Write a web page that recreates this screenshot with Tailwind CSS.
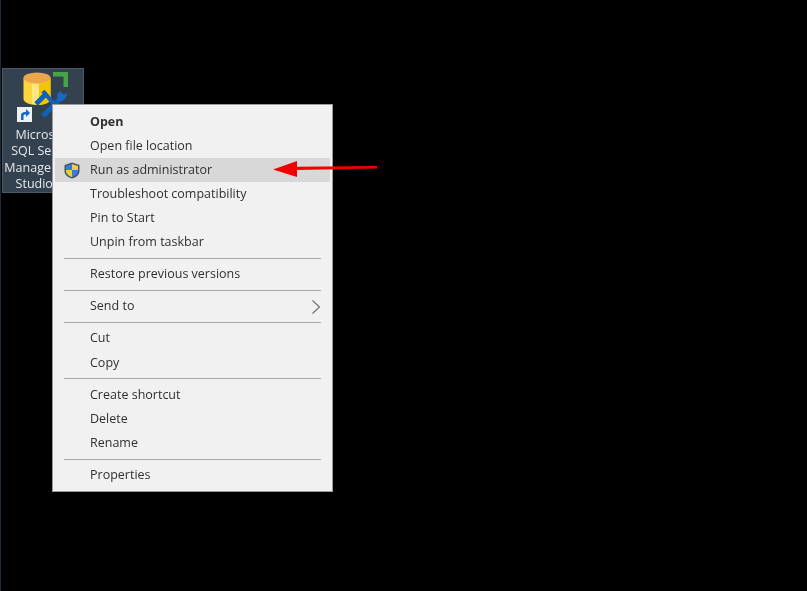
<!DOCTYPE html>
<html lang="en">
<head>
  <meta charset="UTF-8" />
  <title>Context menu</title>
  <script src="https://cdn.jsdelivr.net/npm/@tailwindcss/browser@4"></script>
</head>
<body class="bg-black">
  <div class="relative w-[807px] h-[591px] overflow-hidden bg-black font-['Open_Sans',sans-serif] border-l border-[#1c2a3a] blur-[0.35px]">

    <!-- desktop icon -->
    <div class="absolute left-[1px] top-[68px] w-[82px] h-[125px] bg-[#34424f] border border-[#4c5a68] text-[#e4e8ec] text-[12.5px] leading-[16.4px] text-center pt-[58px]">
      <svg class="absolute left-[14px] top-[1px]" width="56" height="56" viewBox="0 0 56 56">
        <path d="M6.500 8v21c0 3 6 6 13.500 6s13.500-3 13.500-6V8z" fill="#fdd53c"/>
        <path d="M22 14v21c7-.5 11.500-3 11.500-6V8c0 3-4.500 5.500-11.500 6z" fill="#f4c400"/>
        <path d="M15 13v21l7 1V14z" fill="#ffe680"/>
        <ellipse cx="20" cy="8" rx="13.500" ry="5.500" fill="#eda64c"/>
        <path d="M36 2h15v15h-4.500V6.500H36z" fill="#45a545"/>
        <path d="M19 34L30 23" fill="none" stroke="#0f62b8" stroke-width="5"/>
        <path d="M26 21l10 12" fill="none" stroke="#0f62b8" stroke-width="4"/>
        <path d="M26 46l18-18" fill="none" stroke="#0f62b8" stroke-width="5"/>
        <path d="M40 24l4-3c0 2 2 4 4 3l2-1c0 5-4 9-9 8z" fill="#1569c7"/>
      </svg>
      <svg class="absolute left-[14px] top-[38px]" width="15" height="15" viewBox="0 0 15 15">
        <rect width="15" height="15" fill="#eef1f4"/>
        <path d="M4 13V8c0-2 2-3 4-3h1V2l4 4-4 4V7.500H8c-1 0-1.500.5-1.500 1.500v4z" fill="#1668c4"/>
      </svg>
      <div class="whitespace-nowrap">Microsoft</div>
      <div class="whitespace-nowrap">SQL Server</div>
      <div class="whitespace-nowrap -mx-2">Management</div>
      <div class="whitespace-nowrap">Studio 18</div>
    </div>

    <!-- context menu -->
    <div class="absolute left-[51px] top-[104px] w-[281px] h-[388px] bg-[#f2f1f2] border border-[#9a9a9a] pt-[5px] px-[2px] text-[#303030] text-[12.5px]">
      <div class="h-[24.1px] flex items-center pl-[35px] font-bold">Open</div>
      <div class="h-[24.1px] flex items-center pl-[35px]">Open file location</div>
      <div class="h-[24.1px] flex items-center pl-[35px] relative bg-[#d9d8d9]">
        <svg class="absolute left-[9px] top-[4px]" width="16" height="17" viewBox="0 0 16 17">
          <path d="M8 .5L15.500 3v6c0 4-3.500 6.500-7.500 7.500C4 15.500.5 13 .5 9V3z" fill="#44566c"/>
          <path d="M8 2L2 4v4h6z" fill="#2e7fd6"/>
          <path d="M8 2l6 2v4H8z" fill="#f6c83e"/>
          <path d="M2 8h6v7C5 14.200 2 12 2 9z" fill="#f6c83e"/>
          <path d="M8 8h6v1c0 3-3 5.200-6 6z" fill="#2e7fd6"/>
        </svg>
        Run as administrator
      </div>
      <div class="h-[24.1px] flex items-center pl-[35px]">Troubleshoot compatibility</div>
      <div class="h-[24.1px] flex items-center pl-[35px]">Pin to Start</div>
      <div class="h-[24.1px] flex items-center pl-[35px]">Unpin from taskbar</div>
      <div class="h-[8px] flex items-center pl-[9px] pr-[9px]"><div class="w-full h-px bg-[#a8a8a8]"></div></div>
      <div class="h-[24.1px] flex items-center pl-[35px]">Restore previous versions</div>
      <div class="h-[8px] flex items-center pl-[9px] pr-[9px]"><div class="w-full h-px bg-[#a8a8a8]"></div></div>
      <div class="h-[24.1px] flex items-center justify-between pl-[35px] pr-[9px]">
        Send to
        <svg width="10" height="16" viewBox="0 0 10 16" fill="none" stroke="#6a6a6a" stroke-width="1.100"><path d="M1.500 1.500L8.500 8l-7 6.500"/></svg>
      </div>
      <div class="h-[8px] flex items-center pl-[9px] pr-[9px]"><div class="w-full h-px bg-[#a8a8a8]"></div></div>
      <div class="h-[24.1px] flex items-center pl-[35px]">Cut</div>
      <div class="h-[24.1px] flex items-center pl-[35px]">Copy</div>
      <div class="h-[8px] flex items-center pl-[9px] pr-[9px]"><div class="w-full h-px bg-[#a8a8a8]"></div></div>
      <div class="h-[24.1px] flex items-center pl-[35px]">Create shortcut</div>
      <div class="h-[24.1px] flex items-center pl-[35px]">Delete</div>
      <div class="h-[24.1px] flex items-center pl-[35px]">Rename</div>
      <div class="h-[8px] flex items-center pl-[9px] pr-[9px]"><div class="w-full h-px bg-[#a8a8a8]"></div></div>
      <div class="h-[24.1px] flex items-center pl-[35px]">Properties</div>
    </div>

    <!-- red arrow annotation -->
    <svg class="absolute left-[270px] top-[158px]" width="110" height="22" viewBox="0 0 110 22">
      <path d="M2 11.500L26 3v5.800L106 8v2.500L26 12v7z" fill="#f00000"/>
    </svg>
  </div>
</body>
</html>
